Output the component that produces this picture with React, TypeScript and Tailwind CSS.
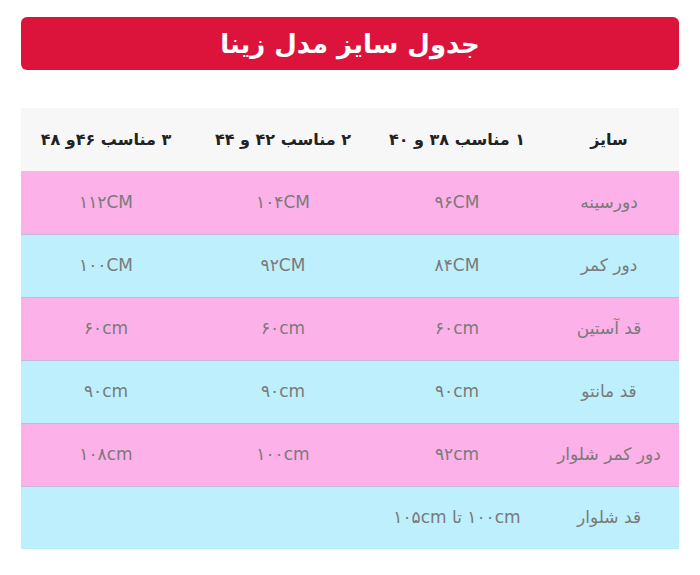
import React from "react";

const rows = [
  { label: "دورسینه", a: "۹۶CM", b: "۱۰۴CM", c: "۱۱۲CM" },
  { label: "دور کمر", a: "۸۴CM", b: "۹۲CM", c: "۱۰۰CM" },
  { label: "قد آستین", a: "۶۰cm", b: "۶۰cm", c: "۶۰cm" },
  { label: "قد مانتو", a: "۹۰cm", b: "۹۰cm", c: "۹۰cm" },
  { label: "دور کمر شلوار", a: "۹۲cm", b: "۱۰۰cm", c: "۱۰۸cm" },
  { label: "قد شلوار", a: "۱۰۰cm تا ۱۰۵cm", b: "", c: "" },
];

const cols = "grid grid-cols-[140px_164px_184px_170px]";

const App = () => {
  return (
    <div
      dir="rtl"
      className="min-h-[575px] bg-white px-[21px] pt-[17px] font-['DejaVu_Sans','Noto_Sans',sans-serif]"
    >
      <div className="h-[53px] rounded-md bg-[#dc143c] flex items-center justify-center">
        <h1 className="text-[26px] font-bold text-white leading-none">جدول سایز مدل زینا</h1>
      </div>

      <div className="mt-[38px] w-[658px]">
        <div className={`${cols} h-[63px] bg-[#f7f7f7] items-center text-center text-[16px] font-bold text-[#222]`}>
          <div>سایز</div>
          <div>۱ مناسب ۳۸ و ۴۰</div>
          <div>۲ مناسب ۴۲ و ۴۴</div>
          <div>۳ مناسب ۴۶و ۴۸</div>
        </div>
        {rows.map((r, i) => (
          <div
            key={r.label}
            className={`${cols} h-[63px] items-center text-center text-[17px] text-[#7a7a7a] ${
              i % 2 === 0 ? "bg-[#fcb1e8]" : "bg-[#bdeffc]"
            } ${i > 0 ? "border-t border-[#c4b8de]" : ""}`}
          >
            <div>{r.label}</div>
            <div>{r.a}</div>
            <div>{r.b}</div>
            <div>{r.c}</div>
          </div>
        ))}
      </div>
    </div>
  );
};

export default App;
